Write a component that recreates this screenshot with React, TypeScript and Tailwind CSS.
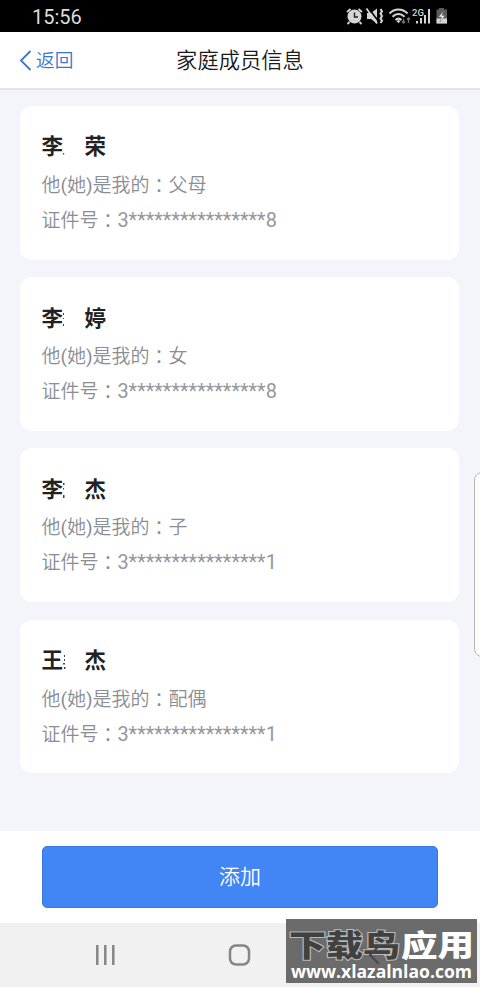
type Member = {
  surname: string;
  givenName: string;
  relation: string;
  idNumber: string;
  residue: string;
};

const members: Member[] = [
  { surname: "李", givenName: "荣", relation: "父母", idNumber: "3****************8", residue: "M0 15h1.2v1.5H0z" },
  { surname: "李", givenName: "婷", relation: "女", idNumber: "3****************8", residue: "M0 4h1v2H0zM0 9h1v1H0zM0 15h1v2H0z" },
  { surname: "李", givenName: "杰", relation: "子", idNumber: "3****************1", residue: "M0 3h1.5v2H0zM0 8h1v1.5H0zM0 15h1.5v3H0z" },
  { surname: "王", givenName: "杰", relation: "配偶", idNumber: "3****************1", residue: "M1 4h1v2H1zM1 8h1v2H1zM0 12h2v1.5H0zM1 16h1.5v2H1z" },
];

function StatusBar() {
  return (
    <div className="flex h-8 shrink-0 items-center justify-between bg-black pl-8 pr-[31px] text-[#dedede]">
      <span className="pt-0.5 text-[20px] leading-8">15:56</span>
      <svg width="104" height="24" viewBox="0 0 104 24" fill="none">
        <path d="M2 8 5.500 5M17 8 13.500 5M4.500 18l-2 2M14.500 18l2 2" stroke="#d5d5d5" strokeWidth="1.800" />
        <circle cx="9.500" cy="12.500" r="7" fill="#d5d5d5" />
        <path d="M9.500 8.500v4.500h3.500" stroke="#222" strokeWidth="1.400" />
        <path d="M22 9h4l6-4.500v15L26 15h-4z" fill="#d5d5d5" />
        <path d="M23 3.500 34 18" stroke="#000" strokeWidth="1.600" />
        <path d="M21.500 4.500 32 19.500" stroke="#d5d5d5" strokeWidth="1.800" />
        <path d="M35.500 5l1.500 2.300-1.500 2.300L37 12l-1.500 2.400L37 16.700 35.500 19" stroke="#d5d5d5" strokeWidth="2" />
        <path d="M44.500 9.500c5-5.300 13-5.300 18 0M47.500 12.800c3.500-3.600 8.500-3.600 12 0M50.500 16c2-1.800 4-1.800 6 0" stroke="#d5d5d5" strokeWidth="2" />
        <path d="m51.500 17 2 2.200 2-2.200-2-1z" fill="#d5d5d5" />
        <path d="M58.500 15v4m-1.500-1.500 1.500 1.500 1.500-1.500M63.500 19v-5m-1.500 1.500 1.500-1.500 1.500 1.500" stroke="#777" strokeWidth="1.300" />
        <text x="67" y="12" fill="#d5d5d5" fontSize="9.500" fontWeight="500" fontFamily="Roboto, sans-serif">2G</text>
        <path d="M72 17v2.500M76 14v5.500M80 11v8.500M84 5v14.500" stroke="#d5d5d5" strokeWidth="2" />
        <path d="M91.500 5.500h2.500V4h5v1.500h3v14H91.500z" fill="#5c5c5c" />
        <path d="M91.500 14.500H102v5H91.500z" fill="#d5d5d5" />
        <path d="m98.500 7-5 6h3l-1.500 5 5-6.500h-3z" fill="#f0f0f0" stroke="#555" strokeWidth=".4" />
      </svg>
    </div>
  );
}

function Header() {
  return (
    <header className="relative flex h-[58px] shrink-0 items-center justify-center border-b-2 border-[#e4e5ea] bg-white">
      <button className="absolute left-[19px] top-px flex h-14 items-center gap-1 text-[18.700px] font-[350] text-[#3975d5]">
        <svg width="13" height="22" viewBox="0 0 13 22" fill="none" stroke="currentColor" strokeWidth="1.800">
          <path d="M11.500 1 2 10.500l9.500 9.500" />
        </svg>
        <span className="pt-px">返回</span>
      </button>
      <h1 className="pt-0.5 text-[21.300px] font-[350] text-[#1a1a1a]">家庭成员信息</h1>
    </header>
  );
}

function Colon() {
  return <span className="relative top-px font-['Noto_Sans_CJK_TC',sans-serif]" lang="zh-TW">：</span>;
}

function MemberCard({ member }: { member: Member }) {
  return (
    <section className="h-[153.500px] w-[439px] shrink-0 rounded-xl bg-white px-[21px] pt-[26px]">
      <h2 className="flex h-[31px] items-center text-[21.500px] font-bold text-[#222]">
        {member.surname}
        <svg className="w-[21.500px]" height="20" viewBox="0 0 21.500 20" fill="#444">
          <path d={member.residue} />
        </svg>
        {member.givenName}
      </h2>
      <p className="mt-[3px] h-[35px] text-[19px] font-[350] leading-[35px] text-[#8a8d93]">
        他<span className="font-normal">(</span>她<span className="font-normal">)</span>是我的<Colon />{member.relation}
      </p>
      <p className="h-[35.500px] text-[19px] font-[350] leading-[35.500px] text-[#8a8d93]">
        证件号<Colon /><span className="text-[19.900px] font-normal text-[#94979c]">{member.idNumber}</span>
      </p>
    </section>
  );
}

function NavigationBar() {
  return (
    <nav className="relative h-16 shrink-0 bg-[#f1f1f1]">
      <svg width="480" height="64" viewBox="0 0 480 64" fill="none" stroke="#858585" strokeWidth="2.500">
        <path d="M97.300 22v20M105.300 22v20M113.300 22v20" />
        <rect x="230" y="22.500" width="19" height="19" rx="6" />
      </svg>
      <div className="absolute -top-1 left-[286px] h-[64px] w-[191px] bg-[#6b6b6b]">
        <svg width="191" height="64" viewBox="0 0 191 64">
          <g fontFamily="'Noto Sans CJK SC', sans-serif" fontWeight="900" fontSize="30">
            <text x="3" y="37" textLength="111" lengthAdjust="spacingAndGlyphs" fill="#414141" stroke="#b9b9b9" strokeWidth="2" paintOrder="stroke">下载鸟</text>
            <text x="115" y="37" textLength="73" lengthAdjust="spacingAndGlyphs" fill="#fff">应用</text>
          </g>
          <path d="m93 27-9 9 9 9" fill="none" stroke="#484848" strokeWidth="2" />
          <text x="5" y="59" textLength="181" lengthAdjust="spacingAndGlyphs" fill="#fff" fontFamily="'Open Sans', sans-serif" fontWeight="700" fontSize="17.500">www.xlazalnlao.com</text>
        </svg>
      </div>
    </nav>
  );
}

export default function App() {
  return (
    <div className="relative flex h-[987px] w-[480px] flex-col overflow-hidden bg-[#f3f5fa] font-[Roboto,'Noto_Sans_CJK_SC',sans-serif]" lang="zh-CN">
      <StatusBar />
      <Header />
      <main className="flex min-h-0 flex-1 flex-col gap-[17.700px] pl-[20.400px] pt-4">
        {members.map((member, index) => (
          <MemberCard key={index} member={member} />
        ))}
      </main>
      <div className="absolute -right-3 top-[472px] h-[185px] w-[18.500px] rounded-lg border border-[#b7b7b9] bg-[#fbfbfb]" />
      <footer className="h-[92px] shrink-0 bg-white px-[42px] pt-[15px]">
        <button className="h-[61.500px] w-full rounded-[5px] border border-[#3b79df] bg-[#4285f4] pt-0.5 text-[21px] font-[350] text-white">
          添加
        </button>
      </footer>
      <NavigationBar />
    </div>
  );
}
